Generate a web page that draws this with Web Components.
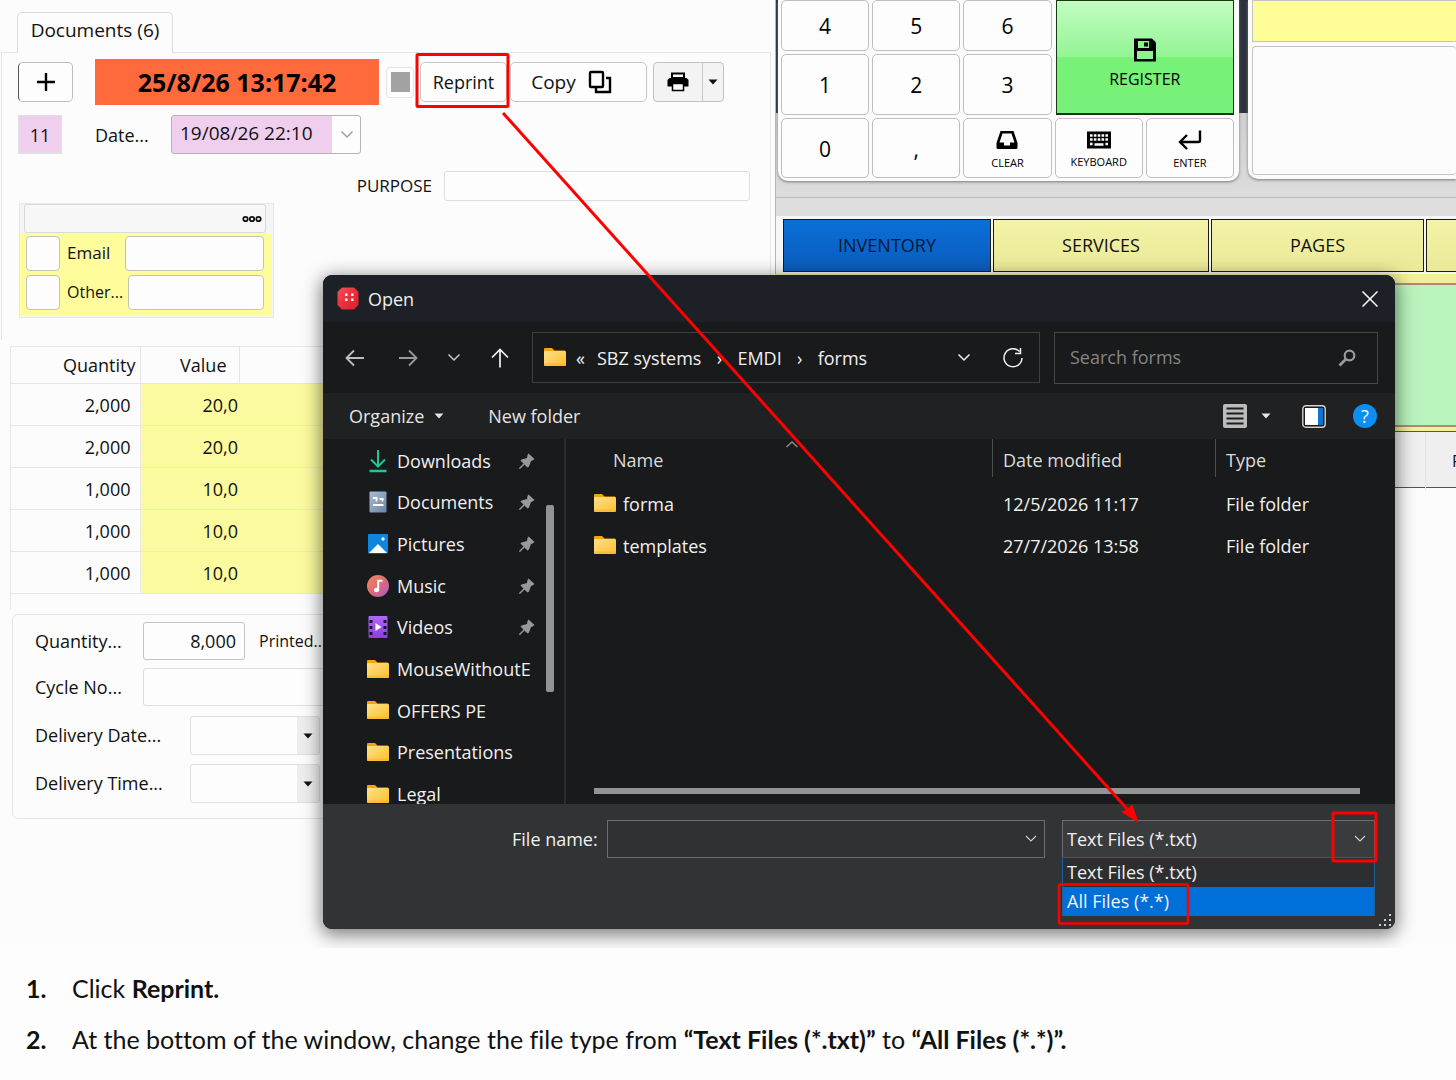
<!DOCTYPE html>
<html lang="en">
<head>
<meta charset="utf-8">
<title>Reprint</title>
<style>
body { margin: 0; background: #fdfdfd; color: #111; font-family: "Open Sans", "Noto Sans", sans-serif; font-size: 18px; line-height: 24px; }
main { position: relative; display: grid; grid-template-columns: 775px 1fr; min-height: 948px; overflow: hidden; background: #fcfcfc; }
.left { display: flex; flex-direction: column; padding-top: 12px; }
open-dialog { position: absolute; left: 323px; right: 61px; top: 275px; }
call-outs { position: absolute; left: 0; top: 0; }
</style>
</head>
<body>
<main>
  <div class="left">
    <document-panel></document-panel>
    <value-table></value-table>
    <delivery-form></delivery-form>
  </div>
  <register-side></register-side>
  <open-dialog></open-dialog>
  <call-outs></call-outs>
</main>
<step-list>
  <step-item number="1.">Click <b>Reprint.</b></step-item>
  <step-item number="2.">At the bottom of the window, change the file type from <b>“Text Files (*.txt)”</b> to <b>“All Files (*.*)”.</b></step-item>
</step-list>

<script>
// every part of the page clones its own static html into an open root
class Part extends HTMLElement {
  constructor() {
    super();
    const template = document.createElement('template');
    template.innerHTML = this.constructor.html;
    this.attachShadow({ mode: 'open' }).append(template.content.cloneNode(true));
  }
}

const controls = `
* { box-sizing: border-box; }
:host { box-sizing: border-box; }
button, input, select { font: inherit; color: inherit; margin: 0; padding: 0; border: 1px solid #d8d8d8; border-radius: 3px; background: #fdfdfd; }
select { appearance: none; }
button { display: flex; align-items: center; justify-content: center; }
`;

const folder = `<svg width="22" height="19" viewBox="0 0 22 19"><defs><linearGradient id="f" x2="1" y2="1"><stop stop-color="#ffe08a"/><stop offset="1" stop-color="#fcc02e"/></linearGradient></defs><path d="M0 1Q0 0 1 0H8L10.500 2.500H21V8H0Z" fill="#f5a50c"/><rect y="3" width="22" height="15" rx="1" fill="url(#f)"/><path d="M1 18H21L22 17V15.500H0V17Z" fill="#f7b11c" opacity=".5"/></svg>`;

const icons = {
  plus: `<svg width="20" height="20" viewBox="0 0 20 20"><path d="M10 1V19M1 10H19" stroke="#000" stroke-width="2.400"/></svg>`,
  copy: `<svg width="24" height="24" viewBox="0 0 24 24" fill="none" stroke="#000" stroke-width="2.400"><rect x="2" y="2" width="13" height="15" rx="1"/><path d="M18 8H22V22H8V18"/></svg>`,
  print: `<svg width="22" height="20" viewBox="0 0 22 20"><path d="M5 1.500H17V6H5Z" fill="#fff" stroke="#000" stroke-width="2"/><path d="M2.500 6H19.500L21.500 8V14.500H0.500V8Z"/><path d="M5.500 11.500H16.500V18.500H5.500Z" fill="#fff" stroke="#000" stroke-width="1.500"/></svg>`,
  down: `<svg width="10" height="6" viewBox="0 0 10 6"><path d="M0.500 0.500H9.500L5 5.500Z" fill="currentColor"/></svg>`,
  chevron: `<svg width="14" height="9" viewBox="0 0 14 9"><path d="M1.500 1.500L7 7L12.500 1.500" fill="none" stroke="currentColor" stroke-width="1.500"/></svg>`,
  thin: `<svg width="14" height="8" viewBox="0 0 14 8"><path d="M2 1L7 6L12 1" fill="none" stroke="currentColor" stroke-width="1.100"/></svg>`,
  dots: `<svg width="20" height="8" viewBox="0 0 20 8" fill="none" stroke="#111" stroke-width="1.800"><circle cx="3.500" cy="4" r="2.200"/><circle cx="10" cy="4" r="2.200"/><circle cx="16.500" cy="4" r="2.200"/></svg>`,
  save: `<svg width="24" height="24" viewBox="0 0 24 24"><path d="M1 0.500H19L23 4.500V23.500H1Z"/><path d="M5 3H16V10H5ZM4 13H20V21H4Z" fill="#8cf58c"/><rect x="11" y="4.500" width="4" height="4"/></svg>`,
  tray: `<svg width="22" height="20" viewBox="0 0 22 20"><path d="M4.500 1H17.500L21.500 13V17.500Q21.500 19 20 19H2Q0.500 19 0.500 17.500V13Z"/><path d="M6.500 3.500H15.500L18.500 12.500H14V15.500H8V12.500H3.500Z" fill="#fcfcfc"/></svg>`,
  keyboard: `<svg width="24" height="18" viewBox="0 0 24 18"><rect width="24" height="17" y=".5"/><path d="M3 4.500H21M3 8.500H21" stroke="#fcfcfc" stroke-width="2.500" stroke-dasharray="2.600 1.250"/><path d="M3 13H5.600M7.500 13.500H16.500M18.400 13H21" stroke="#fcfcfc" stroke-width="2.500"/></svg>`,
  enter: `<svg width="24" height="20" viewBox="0 0 24 20"><path d="M22 0.500V10.500Q22 12 20.500 12H2M9 5L2 12L9 19" fill="none" stroke="#000" stroke-width="2.400"/></svg>`,
  app: `<svg width="22" height="23" viewBox="0 0 22 23"><defs><linearGradient id="a" x2="1" y2="1"><stop stop-color="#f4535a"/><stop offset=".5" stop-color="#ec2f3a"/><stop offset="1" stop-color="#d81f28"/></linearGradient></defs><path d="M5 0.500H17L21.500 5V18L17 22.500H5L0.500 18V5Z" fill="url(#a)"/><path d="M8 6.500H10.500V9H8ZM14 6.500H16.500V9H14ZM8 11.500H10.500V14H8ZM14 11.500H16.500V14H14Z" fill="#fff"/></svg>`,
  close: `<svg width="16" height="16" viewBox="0 0 16 16"><path d="M0.500 0.500L15.500 15.500M15.500 0.500L0.500 15.500" stroke="#fff" stroke-width="1.500"/></svg>`,
  back: `<svg width="20" height="18" viewBox="0 0 20 18"><path d="M19 9H1.500M9 1.500L1.500 9L9 16.500" fill="none" stroke="#bdbdbd" stroke-width="1.800"/></svg>`,
  forward: `<svg width="20" height="18" viewBox="0 0 20 18"><path d="M1 9H18.500M11 1.500L18.500 9L11 16.500" fill="none" stroke="#989898" stroke-width="1.800"/></svg>`,
  up: `<svg width="18" height="20" viewBox="0 0 18 20"><path d="M9 19.500V1.500M1 9.500L9 1.500L17 9.500" fill="none" stroke="#f2f2f2" stroke-width="1.700"/></svg>`,
  refresh: `<svg width="22" height="22" viewBox="0 0 22 22"><path d="M17.500 4.500A9 9 0 1 0 20 11M18.500 1V6.500H13" fill="none" stroke="#f2f2f2" stroke-width="1.500"/></svg>`,
  search: `<svg width="18" height="18" viewBox="0 0 18 18" fill="none" stroke="#9a9a9a"><circle cx="11.500" cy="6.500" r="4.800" stroke-width="2.200"/><path d="M8 10L1.500 16.500" stroke-width="2.800"/></svg>`,
  list: `<svg width="26" height="26" viewBox="0 0 26 26"><rect x="1" y="1" width="24" height="24" rx="2" fill="#bcbcbc"/><path d="M4.500 5.500H21.500M4.500 10.500H21.500M4.500 15.500H21.500M4.500 20.500H21.500" stroke="#1d1d1d" stroke-width="1.800"/></svg>`,
  pane: `<svg width="24" height="23" viewBox="0 0 24 23"><rect x=".8" y=".8" width="22.400" height="21.400" rx="3" fill="#1b1b1b" stroke="#d8d2c8" stroke-width="1.400"/><rect x="3" y="3" width="13" height="17" fill="#fff"/><rect x="16" y="3" width="5" height="17" fill="#0d74cf"/></svg>`,
  downloads: `<svg width="22" height="24" viewBox="0 0 22 24"><path d="M11 1V17M4 10.500L11 17.500L18 10.500" fill="none" stroke="#1fc796" stroke-width="2"/><path d="M2.500 22H19.500" stroke="#1fc796" stroke-width="2.600"/></svg>`,
  documents: `<svg width="22" height="24" viewBox="0 0 22 24"><defs><linearGradient id="d" x2="1" y2="1"><stop stop-color="#a9bdd3"/><stop offset="1" stop-color="#6c85a5"/></linearGradient></defs><rect x="2.500" y="1.500" width="17" height="21" rx="1" fill="url(#d)"/><path d="M6 8H10.500M12.500 9H16.500M6 15H16.500" stroke="#fff" stroke-width="2.200"/><path d="M9.500 8V11.500M15.500 9V11.500" stroke="#fff" stroke-width="1.500"/></svg>`,
  pictures: `<svg width="22" height="22" viewBox="0 0 22 22"><rect x="1" y="1" width="20" height="19.500" rx="1" fill="#0f86de"/><path d="M2 20L11 11L20 20Z" fill="#fff"/><circle cx="16" cy="6" r="1.700" fill="#fff"/></svg>`,
  music: `<svg width="22" height="24" viewBox="0 0 22 24"><defs><linearGradient id="m" x2="1" y2="1"><stop stop-color="#f58a5b"/><stop offset=".5" stop-color="#dd6a78"/><stop offset="1" stop-color="#a95ac8"/></linearGradient></defs><circle cx="11" cy="12" r="11" fill="url(#m)"/><ellipse cx="9.500" cy="16" rx="2.600" ry="2.200" fill="#fff"/><path d="M11.200 16V6.800H15.500" fill="none" stroke="#fff" stroke-width="2"/></svg>`,
  videos: `<svg width="22" height="24" viewBox="0 0 22 24"><defs><linearGradient id="v" x2="0" y2="1"><stop stop-color="#b068f4"/><stop offset="1" stop-color="#8a3fe0"/></linearGradient></defs><rect x="1.500" y="1" width="19" height="22" rx="1" fill="url(#v)"/><path d="M4 5V21M18 5V21" stroke="#1b1330" stroke-width="3" stroke-dasharray="3 3"/><path d="M8.500 8L14.500 12L8.500 16Z" fill="#fff"/></svg>`,
  folder,
  pin: `<svg width="18" height="18" viewBox="0 0 18 18"><path d="M10.500 1.500L16.500 7L14.500 8.500L13 9L11 14.500L9.500 15.500L6.500 12.500L2 17L1 16.500V16L5.500 11.500L2.500 8.500L3.500 7.500L9 6L9.500 3Z" fill="#93999f"/></svg>`,
  sort: `<svg width="12" height="7" viewBox="0 0 12 7"><path d="M0.500 6L6 1L11.500 6" fill="none" stroke="#8f8f8f" stroke-width="1.300"/></svg>`,
  grip: `<svg width="14" height="12" viewBox="0 0 14 12" fill="#d0d0d0"><path d="M10 0H12V2H10ZM5 5H7V7H5ZM10 5H12V7H10ZM0 10H2V12H0ZM5 10H7V12H5ZM10 10H12V12H10Z"/></svg>`
};

class UiIcon extends HTMLElement {
  constructor() {
    super();
    this.attachShadow({ mode: 'open' });
    this.shadowRoot.innerHTML = `<style>:host { display: inline-flex; flex: none; } svg { display: block; }</style>${icons[this.getAttribute('name')]}`;
  }
}
customElements.define('ui-icon', UiIcon);

class DocumentPanel extends Part {
  static html = `
<style>${controls}
:host { display: block; }
.tab { width: 156px; height: 41px; margin: 0 0 -1px 17px; border: 1px solid #dcdcdc; border-bottom: 0; border-radius: 5px 5px 0 0; background: #fcfcfc; position: relative; padding-bottom: 6px; font-size: 19px; }
.panel { height: 288px; margin: 0 4px 0 1px; border: solid #e6e6e6; border-width: 1px 1px 0; padding: 6px 20px 0 16px; }
.row { display: flex; align-items: center; }
.add { width: 55px; height: 40px; border-color: #bdbdbd; border-left-color: #555; border-radius: 5px; }
.stamp { width: 284px; margin: 0 7px 0 22px; background: #ff6a3d; font-size: 25px; line-height: 46px; font-weight: 700; text-align: center; color: #000; }
.stop { width: 28px; height: 31px; border: 1px solid #e4e4e4; border-radius: 4px; }
.stop i { width: 19px; height: 20px; background: #a2a2a2; }
.big { height: 40px; border-color: #c6c6c6; border-radius: 5px; }
.reprint { width: 87px; margin: 0 3px 0 6px; }
.copy { width: 137px; gap: 12px; padding-right: 14px; font-size: 19px; }
.split { display: flex; width: 71px; height: 40px; margin-left: 6px; border: 1px solid #c2c2c2; border-radius: 4px; background: #f3f3f3; }
.split button { border: 0; background: none; border-radius: 0; flex: 1; }
.split button + button { flex: 0 0 21px; border-left: 1px solid #c8c8c8; }
.second { margin-top: 10px; }
.number { width: 44px; height: 39px; border: 1px solid #e2dfe2; border-width: 1px 1px 2px; background: #efcfed; line-height: 38px; text-align: center; }
.second label { width: 76px; margin-left: 33px; }
.combo { position: relative; }
.combo select { width: 190px; height: 39px; padding: 0 0 4px 8px; border-color: #b5b5b5; background: linear-gradient(90deg, #f0cfee 160px, #fdfdfd 160px); font-size: 19px; }
.combo ui-icon { position: absolute; right: 7px; top: 15px; color: #a0a0a0; }
.purpose { margin-top: 17px; justify-content: flex-end; gap: 12px; font-size: 17px; }
.purpose input { width: 306px; height: 30px; border-color: #dedede; }
.contact { width: 255px; margin: 2px 0 0 1px; border: 1px solid #e8e8e8; padding-bottom: 2px; background: #f4f4f4; font-size: 17px; }
.more { width: 242px; height: 29px; margin: 0 0 1px 4px; padding-right: 3px; justify-content: flex-end; background: #f7f7f7; }
.entries { width: 252px; padding: 2px 8px 6px 6px; background: #fffc9c; display: flex; flex-direction: column; gap: 5px; }
.entries .row { height: 34px; }
.entries input { height: 35px; flex: 1; min-width: 0; border-color: #c4c4b0; border-radius: 4px; }
.entries input[type=checkbox] { appearance: none; flex: 0 0 34px; margin-right: 7px; }
.entries label { width: 58px; white-space: nowrap; }
.entries .other { width: 61px; font-size: 16px; }
</style>
<button class="tab">Documents (6)</button>
<div class="panel">
  <div class="row">
    <button class="add" aria-label="Add"><ui-icon name="plus"></ui-icon></button>
    <div class="stamp">25/8/26 13:17:42</div>
    <button class="stop" aria-label="Stop"><i></i></button>
    <button class="big reprint">Reprint</button>
    <button class="big copy">Copy <ui-icon name="copy"></ui-icon></button>
    <div class="split">
      <button aria-label="Print"><ui-icon name="print"></ui-icon></button>
      <button aria-label="Print options"><ui-icon name="down"></ui-icon></button>
    </div>
  </div>
  <div class="row second">
    <div class="number">11</div>
    <label for="date">Date...</label>
    <div class="combo"><select id="date"><option>19/08/26 22:10</option></select><ui-icon name="chevron"></ui-icon></div>
  </div>
  <div class="row purpose"><label for="purpose">PURPOSE</label><input id="purpose"></div>
  <div class="contact">
    <button class="more" aria-label="More"><ui-icon name="dots"></ui-icon></button>
    <div class="entries">
      <div class="row"><input type="checkbox" aria-label="Use email"><label for="email">Email</label><input id="email"></div>
      <div class="row"><input type="checkbox" aria-label="Use other"><label class="other" for="other">Other...</label><input id="other"></div>
    </div>
  </div>
</div>`;
}
customElements.define('document-panel', DocumentPanel);

class ValueTable extends Part {
  static html = `
<style>
:host { display: block; margin: 6px 4px 0 10px; border: solid #e6e6e6; border-width: 1px 0 0 1px; height: 264px; box-sizing: border-box; border-top-left-radius: 3px; }
table { width: 100%; border-collapse: collapse; table-layout: fixed; }
th, td { box-sizing: border-box; padding: 0; text-align: right; font-weight: 400; border-bottom: 1px solid #e4e6e8; }
th { height: 36px; border-right: 1px solid #e6e6e6; padding-right: 4px; }
th + th { padding-right: 12px; }
td { height: 42px; padding-top: 2px; }
td:first-child { padding-right: 9px; border-right: 1px solid #eaeaea; }
td + td { background: #fbfa9e; padding-right: 1px; }
</style>
<table>
  <colgroup><col style="width:129px"><col style="width:99px"><col></colgroup>
  <thead><tr><th>Quantity</th><th>Value</th><th></th></tr></thead>
  <tbody>
    <tr><td>2,000</td><td>20,0</td><td></td></tr>
    <tr><td>2,000</td><td>20,0</td><td></td></tr>
    <tr><td>1,000</td><td>10,0</td><td></td></tr>
    <tr><td>1,000</td><td>10,0</td><td></td></tr>
    <tr><td>1,000</td><td>10,0</td><td></td></tr>
  </tbody>
</table>`;
}
customElements.define('value-table', ValueTable);

class DeliveryForm extends Part {
  static html = `
<style>${controls}
:host { display: flex; flex-direction: column; margin: 4px 4px 0 12px; height: 205px; border: 1px solid #e4e4e4; border-radius: 6px; padding: 7px 22px; }
.row { display: flex; align-items: center; height: 38px; }
.row + .row { margin-top: 8px; }
.row + .pick { margin-top: 10px; }
label { width: 108px; white-space: nowrap; }
.pick label { width: 155px; }
input { height: 38px; border-color: #dedede; }
.total { width: 102px; text-align: right; padding-right: 8px; border-color: #c4c4c4; }
.printed { margin-left: 14px; font-size: 16px; }
.wide { flex: 1; }
.combo { position: relative; }
select { display: block; width: 130px; height: 39px; border-color: #dedede; background: linear-gradient(90deg, #fdfdfd 106px, #ededed 106px); }
ui-icon { position: absolute; right: 7px; top: 17px; }
</style>
<div class="row"><label for="qty">Quantity...</label><input class="total" id="qty" value="8,000"><span class="printed">Printed...</span></div>
<div class="row"><label for="cycle">Cycle No...</label><input class="wide" id="cycle"></div>
<div class="row pick"><label for="day">Delivery Date...</label><div class="combo"><select id="day"></select><ui-icon name="down"></ui-icon></div></div>
<div class="row pick"><label for="time">Delivery Time...</label><div class="combo"><select id="time"></select><ui-icon name="down"></ui-icon></div></div>`;
}
customElements.define('delivery-form', DeliveryForm);

class RegisterSide extends Part {
  static html = `
<style>${controls}
:host { display: flex; flex-direction: column; min-width: 0; overflow: hidden; background: #fcfcfc; }
.top, .tabs { border-left: 1px solid #b4b4b4; }
.top { display: flex; gap: 9px; padding-left: 2px; height: 197px; align-items: flex-start; overflow: hidden; background: linear-gradient(#2c323e 113px, #cfcfcf 113px, #dcdcdc 197px); }
.pad { flex: 0 0 461px; display: grid; grid-template-columns: repeat(5, 1fr); grid-template-rows: 51px 61px 60px; gap: 3px; padding: 0 5px 3px 3px; background: #fbfbfb; border-radius: 0 0 10px 10px; box-shadow: 0 1px 3px #777; }
.pad button { flex-direction: column; border-color: #bfbfbf; border-radius: 5px; padding-top: 1px; font-size: 21px; color: #000; }
.pad .small { font-size: 11px; line-height: 18px; gap: 4px; padding-top: 5px; }
.pad .register { grid-column: 4 / 6; grid-row: 1 / 3; margin-left: 1px; border: 1px solid #163a16; border-bottom-width: 2px; border-radius: 0; background: linear-gradient(#c2fcc2, #93f593 50%, #77f277 50%, #78f07a); font-size: 16px; line-height: 24px; gap: 5px; padding-top: 14px; }
.view { flex: 1; height: 179px; padding-left: 4px; background: #fbfbfb; border-radius: 0 0 0 10px; box-shadow: 0 1px 3px #777; }
.view div { border: 1px solid #c4c4c4; border-right: 0; }
.amount { height: 42px; margin-bottom: 4px; background: #fffd98; }
.screen { height: 129px; border-radius: 4px; background: #fcfcfc; }
.tabs { display: flex; gap: 2px; height: 77px; padding: 21px 0 2px 7px; border-top: 1px solid #bbb; background: linear-gradient(#dedede 18px, #f6f6f6 18px); }
.tabs button { flex: 0 0 216px; border: 1px solid #1b1b10; border-radius: 0; background: linear-gradient(#f3f3a6, #ebe998); padding-bottom: 1px; font-size: 18px; }
.tabs .on { flex-basis: 208px; background: linear-gradient(#0a6ed8, #0a5dbc); color: #03183a; }
.tabs .pages { flex-basis: 213px; }
.goods { height: 157px; border: solid #f3f09a; border-width: 9px 0 4px; background: #fcfcfc; }
.goods div { height: 100%; border: solid #b08a74; border-width: 2px 0; background: #b9f4bc; }
.head { display: grid; grid-template-columns: 650px 1fr; height: 57px; flex: none; border: solid #555; border-width: 1px 0; line-height: 58px; background: #efefef; font-size: 16px; }
.head span + span { padding-left: 26px; border-left: 1px solid #e4e4e4; }
</style>
<div class="top">
  <div class="pad">
    <button>4</button><button>5</button><button>6</button>
    <button class="register"><ui-icon name="save"></ui-icon>REGISTER</button>
    <button>1</button><button>2</button><button>3</button>
    <button>0</button><button>,</button>
    <button class="small"><ui-icon name="tray"></ui-icon>CLEAR</button>
    <button class="small"><ui-icon name="keyboard"></ui-icon>KEYBOARD</button>
    <button class="small"><ui-icon name="enter"></ui-icon>ENTER</button>
  </div>
  <div class="view"><div class="amount"></div><div class="screen"></div></div>
</div>
<div class="tabs">
  <button class="on">INVENTORY</button><button>SERVICES</button><button class="pages">PAGES</button><button aria-label="Next"></button>
</div>
<div class="goods"><div></div></div>
<div class="head"><span></span><span>F</span></div>`;
}
customElements.define('register-side', RegisterSide);

// one entry of the dialog's navigation pane
class PlaceItem extends HTMLElement {
  constructor() {
    super();
    this.attachShadow({ mode: 'open' });
    const pin = this.hasAttribute('pinned') ? '<ui-icon name="pin"></ui-icon>' : '';
    this.shadowRoot.innerHTML = `
<style>
:host { display: flex; align-items: center; overflow: hidden; }
a { display: flex; align-items: center; gap: 8px; width: 168px; color: inherit; text-decoration: none; white-space: nowrap; overflow: hidden; }
ui-icon[name=pin] { margin-left: -17px; }
</style>
<a href="#"><ui-icon name="${this.getAttribute('icon')}"></ui-icon><slot></slot></a>${pin}`;
  }
}
customElements.define('place-item', PlaceItem);

class OpenDialog extends Part {
  static html = `
<style>${controls}
:host { display: block; color: #f0f0f0; background: #191a1b; border-radius: 9px; box-shadow: 0 4px 18px 2px rgba(0, 0, 0, .5); overflow: hidden; }
button { background: none; border: 0; }
.title { display: flex; align-items: center; height: 47px; padding: 0 17px 0 14px; gap: 9px; background: #1d2026; }
.title span { flex: 1; }
.nav { display: flex; align-items: center; height: 71px; padding: 0 17px 0 5px; }
.nav > button { width: 53px; height: 40px; }
.nav > .recent { width: 39px; color: #c8c8c8; }
.path { flex: 1; display: flex; align-items: center; height: 51px; margin: 0 14px 0 6px; padding: 0 15px 0 11px; border: 1px solid #3f4041; }
.path a { color: inherit; text-decoration: none; }
.path .over { width: 31px; padding-left: 10px; }
.path .gt { width: 36px; text-align: center; }
.path .last { flex: 1; }
.path .recent { width: 14px; margin-right: 31px; }
.find { position: relative; }
.find input { display: block; width: 324px; height: 52px; padding: 0 0 2px 15px; border-color: #464748; border-radius: 0; background: #191a1b; }
.find input::placeholder { color: #858585; opacity: 1; }
.find ui-icon { position: absolute; right: 22px; top: 17px; }
.tools { display: flex; align-items: center; height: 46px; padding: 0 18px 0 26px; background: #202122; }
.tools button { gap: 10px; color: #e4e4e4; }
.tools .new { margin: 0 auto 0 44px; }
.tools .view { gap: 13px; margin-right: 31px; }
.tools .help { width: 24px; height: 24px; margin-left: 27px; border-radius: 12px; background: #0c8ff2; color: #fff; }
.body { display: flex; height: 365px; overflow: hidden; }
.places { position: relative; flex: 0 0 243px; height: 376px; padding: 1px 0 0 44px; display: grid; grid-template-rows: repeat(9, 1fr); border-right: 2px solid #2b2c2d; }
.places i { position: absolute; right: 10px; top: 66px; width: 8px; height: 187px; border-radius: 2px; background: #939393; }
.files { flex: 1; position: relative; }
table { width: 100%; border-collapse: collapse; table-layout: fixed; }
th, td { height: 42px; padding: 0 0 0 11px; text-align: left; font-weight: 400; }
th { height: 44px; padding-bottom: 3px; color: #dcdcdc; }
th + th { background: linear-gradient(#4c4d4e, #4c4d4e) no-repeat 0 0 / 1px 38px; }
th:first-child { padding-left: 47px; }
td:first-child { padding-left: 28px; }
td ui-icon { margin-right: 7px; vertical-align: -2px; }
.sort { position: absolute; left: 220px; top: 2px; }
.bar { position: absolute; left: 28px; right: 35px; bottom: 10px; height: 6px; background: #949494; }
.foot { position: relative; display: flex; align-items: flex-start; height: 125px; padding: 16px 20px 0 189px; background: #323334; }
.foot label { line-height: 38px; margin-right: 9px; }
.foot select { display: block; width: 100%; height: 38px; border: 1px solid #6c6d6e; border-radius: 0; background: #303132; padding-left: 4px; }
.name { flex: 1; position: relative; margin-right: 17px; }
.type { flex: 0 0 313px; position: relative; }
.type select { background: #3a3b3c; }
.foot .name ui-icon, .type > ui-icon { position: absolute; right: 7px; top: 15px; color: #d0d0d0; }
.type > ui-icon { right: 8px; }
ul { position: absolute; left: 0; right: 0; top: 37px; margin: 0; padding: 0; list-style: none; border: 1px solid #1d5f9d; border-bottom: 0; background: #2d2e2f; }
li { padding-left: 4px; line-height: 29px; }
li.on { background: #0070d8; }
.grip { position: absolute; right: 2px; bottom: 3px; }
</style>
<div class="title"><ui-icon name="app"></ui-icon><span>Open</span><button aria-label="Close"><ui-icon name="close"></ui-icon></button></div>
<div class="nav">
  <button aria-label="Back"><ui-icon name="back"></ui-icon></button>
  <button aria-label="Forward"><ui-icon name="forward"></ui-icon></button>
  <button class="recent" aria-label="Recent"><ui-icon name="chevron"></ui-icon></button>
  <button aria-label="Up"><ui-icon name="up"></ui-icon></button>
  <div class="path">
    <ui-icon name="folder"></ui-icon><span class="over">«</span><a href="#">SBZ systems</a><span class="gt">›</span><a href="#">EMDI</a><span class="gt">›</span><a class="last" href="#">forms</a>
    <button class="recent" aria-label="Previous locations"><ui-icon name="chevron"></ui-icon></button>
    <button aria-label="Refresh"><ui-icon name="refresh"></ui-icon></button>
  </div>
  <div class="find"><input type="text" placeholder="Search forms" aria-label="Search forms"><ui-icon name="search"></ui-icon></div>
</div>
<div class="tools">
  <button>Organize <ui-icon name="down"></ui-icon></button>
  <button class="new">New folder</button>
  <button class="view" aria-label="View"><ui-icon name="list"></ui-icon><ui-icon name="down"></ui-icon></button>
  <button aria-label="Preview pane"><ui-icon name="pane"></ui-icon></button>
  <button class="help">?</button>
</div>
<div class="body">
  <div class="places">
    <place-item icon="downloads" pinned>Downloads</place-item>
    <place-item icon="documents" pinned>Documents</place-item>
    <place-item icon="pictures" pinned>Pictures</place-item>
    <place-item icon="music" pinned>Music</place-item>
    <place-item icon="videos" pinned>Videos</place-item>
    <place-item icon="folder">MouseWithoutE</place-item>
    <place-item icon="folder">OFFERS PE</place-item>
    <place-item icon="folder">Presentations</place-item>
    <place-item icon="folder">Legal</place-item>
    <i></i>
  </div>
  <div class="files">
    <table>
      <colgroup><col><col style="width:223px"><col style="width:180px"></colgroup>
      <thead><tr><th>Name</th><th>Date modified</th><th>Type</th></tr></thead>
      <tbody>
        <tr><td><ui-icon name="folder"></ui-icon>forma</td><td>12/5/2026 11:17</td><td>File folder</td></tr>
        <tr><td><ui-icon name="folder"></ui-icon>templates</td><td>27/7/2026 13:58</td><td>File folder</td></tr>
      </tbody>
    </table>
    <ui-icon class="sort" name="sort"></ui-icon>
    <div class="bar"></div>
  </div>
</div>
<div class="foot">
  <label for="file">File name:</label>
  <div class="name"><select id="file"></select><ui-icon name="thin"></ui-icon></div>
  <div class="type">
    <select aria-label="File type"><option>Text Files (*.txt)</option></select><ui-icon name="thin"></ui-icon>
    <ul><li>Text Files (*.txt)</li><li class="on">All Files (*.*)</li></ul>
  </div>
  <ui-icon class="grip" name="grip"></ui-icon>
</div>`;
}
customElements.define('open-dialog', OpenDialog);

// red marks drawn over the two windows
class CallOuts extends Part {
  static html = `
<style>:host { display: block; pointer-events: none; } svg { display: block; }</style>
<svg width="1456" height="948" viewBox="0 0 1456 948" fill="none" stroke="#f00" stroke-width="3">
  <rect x="417" y="54.500" width="91" height="52" rx="1"/>
  <rect x="1333" y="813" width="43" height="48" rx="1"/>
  <rect x="1059" y="884.500" width="129" height="39" rx="1" stroke-width="2.500"/>
  <path d="M503 113L1128 810"/>
  <path d="M1138 822L1122 812L1127.500 809.500L1132 805Z" fill="#f00" stroke-width="1"/>
</svg>`;
}
customElements.define('call-outs', CallOuts);

class StepItem extends HTMLElement {
  constructor() {
    super();
    this.attachShadow({ mode: 'open' });
    this.shadowRoot.innerHTML = `
<style>:host { display: flex; } b { flex: 0 0 46px; }</style>
<b>${this.getAttribute('number')}</b><span><slot></slot></span>`;
  }
}
customElements.define('step-item', StepItem);

class StepList extends Part {
  static html = `
<style>:host { display: block; padding: 15px 26px 0; font-family: Lato, sans-serif; font-size: 25px; line-height: 51px; font-variant-ligatures: none; }</style>
<slot></slot>`;
}
customElements.define('step-list', StepList);
</script>
</body>
</html>
